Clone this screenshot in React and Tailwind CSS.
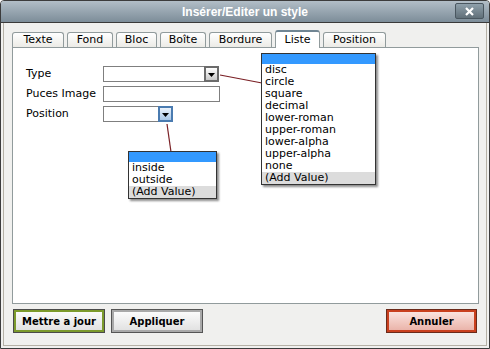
import React from "react";

const tabs = [
  { label: "Texte", w: "w-[52px]" },
  { label: "Fond", w: "w-[46px]" },
  { label: "Bloc", w: "w-[41px]" },
  { label: "Boîte", w: "w-[46px]" },
  { label: "Bordure", w: "w-[63px]" },
  { label: "Liste", w: "w-[45px]", active: true },
  { label: "Position", w: "w-[63px]" },
];

const typeItems = ["disc", "circle", "square", "decimal", "lower-roman", "upper-roman", "lower-alpha", "upper-alpha", "none"];

function Arrow({ blue }) {
  return (
    <div
      className={
        "w-[15px] h-[16px] flex items-center justify-center border-2 " +
        (blue
          ? "border-[#4a7bb0] bg-gradient-to-b from-[#eaf2fb] to-[#a9c7e8]"
          : "border-[#6b6b6b] bg-gradient-to-b from-[#ffffff] to-[#c9c9c9]")
      }
    >
      <svg width="7" height="5" viewBox="0 0 7 5" className="mt-[2px]">
        <polygon points="0,0 7,0 3.5,4" fill="#000" />
      </svg>
    </div>
  );
}

function List({ items, className }) {
  return (
    <div className={"absolute bg-white border border-[#333] shadow-[2px_2px_2px_rgba(0,0,0,0.45)] " + className}>
      <div className="h-[10px] bg-[#3399ff]" />
      {items.map((t) => (
        <div key={t} className="h-[12px] leading-[12px] pl-[3px] text-[11px] text-black">{t}</div>
      ))}
      <div className="h-[12px] leading-[12px] pl-[3px] text-[11px] text-black bg-[#dcdcdc]">(Add Value)</div>
    </div>
  );
}

export default function App() {
  return (
    <div
      className="relative w-[490px] h-[349px] flex flex-col bg-[#f0f0ee] border border-[#3c3c3c] rounded-t-[4px] overflow-hidden"
      style={{ fontFamily: '"DejaVu Sans", Verdana, sans-serif' }}
    >
      {/* Title bar */}
      <div className="relative h-[22px] shrink-0 flex items-center justify-center bg-gradient-to-b from-[#b2bec7] to-[#7d8d99] border-b border-[#3a3a3a]">
        <span
          className="text-white font-bold text-[12px]"
          style={{ fontFamily: '"Liberation Sans", Arial, sans-serif' }}
        >
          Insérer/Editer un style
        </span>
        <div className="absolute right-[5px] top-[2px] w-[29px] h-[16px] rounded-[2px] border border-[#4a5760] bg-gradient-to-b from-[#8fa0ab] to-[#617079] flex items-center justify-center">
          <svg width="9" height="9" viewBox="0 0 9 9">
            <path d="M1 1 L8 8 M8 1 L1 8" stroke="#fff" strokeWidth="2.2" />
          </svg>
        </div>
      </div>

      {/* Body */}
      <div className="flex-1 flex flex-col px-[2px] pb-[2px]">
        <div className="flex-1 flex flex-col border-x border-b border-[#b5b1a6] pt-[7px] pl-[8px] pr-[7px]">
          {/* Tabs */}
          <div className="h-[17px] flex items-end gap-[3px] relative z-10">
            {tabs.map((t) =>
              t.active ? (
                <div
                  key={t.label}
                  className={t.w + " h-[18px] -mb-px bg-white border border-b-0 border-[#919b9c] border-t-2 border-t-[#6f8593] rounded-t-[3px] flex items-center justify-center text-[11px] text-black"}
                >
                  {t.label}
                </div>
              ) : (
                <div
                  key={t.label}
                  className={t.w + " h-[15px] bg-gradient-to-b from-[#ffffff] to-[#ecebe6] border border-b-0 border-[#919b9c] rounded-t-[3px] flex items-center justify-center text-[11px] text-black"}
                >
                  {t.label}
                </div>
              )
            )}
          </div>

          {/* Panel */}
          <div className="h-[257px] bg-white border border-[#919b9c] pt-[18px] pl-[13px] flex flex-col gap-[4px] text-[11px] text-black">
            <div className="h-[16px] flex items-center">
              <div className="w-[77px]">Type</div>
              <div className="w-[116px] h-[16px] border border-[#7f7f7f] border-r-0 flex justify-end bg-white">
                <div className="-mt-px">
                  <Arrow />
                </div>
              </div>
            </div>
            <div className="h-[16px] flex items-center">
              <div className="w-[77px]">Puces Image</div>
              <div className="w-[117px] h-[16px] border border-[#7f7f7f] bg-white" />
            </div>
            <div className="h-[16px] flex items-center">
              <div className="w-[77px]">Position</div>
              <div className="w-[70px] h-[16px] border border-[#7f7f7f] border-r-0 flex justify-end bg-white">
                <div className="-mt-px">
                  <Arrow blue />
                </div>
              </div>
            </div>
          </div>

          {/* Buttons */}
          <div className="mt-[6px] h-[22px] flex items-center pl-[2px] pr-[3px]">
            <button className="w-[90px] h-[22px] border-2 border-[#7c9a2c] shadow-[0_0_0_1px_#4a4a4a] bg-gradient-to-b from-[#fbfbfb] to-[#e2e2e2] text-[10px] font-bold text-black">
              Mettre a jour
            </button>
            <button className="ml-[8px] w-[90px] h-[22px] border-2 border-[#a9a9a9] shadow-[0_0_0_1px_#555] bg-gradient-to-b from-[#fbfbfb] to-[#e2e2e2] text-[10px] font-bold text-black">
              Appliquer
            </button>
            <div className="flex-1" />
            <button className="w-[89px] h-[22px] border-2 border-[#c9401e] shadow-[0_0_0_1px_#6a2a1a] bg-gradient-to-b from-[#fae3de] to-[#eab4aa] text-[10px] font-bold text-black">
              Annuler
            </button>
          </div>
        </div>
      </div>

      {/* Connector lines */}
      <svg className="absolute left-0 top-0 pointer-events-none" width="490" height="349">
        <line x1="219" y1="74" x2="261" y2="82" stroke="#7a1f24" strokeWidth="1.2" />
        <line x1="166" y1="123" x2="170" y2="151" stroke="#7a1f24" strokeWidth="1.2" />
      </svg>

      {/* Dropdown lists */}
      <List items={typeItems} className="left-[260px] top-[52px] w-[115px]" />
      <List items={["inside", "outside"]} className="left-[127px] top-[150px] w-[89px]" />
    </div>
  );
}
